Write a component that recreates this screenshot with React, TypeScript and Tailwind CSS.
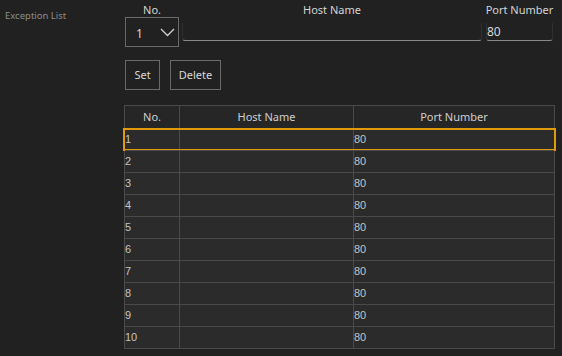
import { useState } from 'react';

const ROWS = Array.from({ length: 10 }, (_, i) => ({ no: i + 1, host: '', port: '80' }));

function Chevron() {
  return (
    <svg width="15" height="9" viewBox="0 0 15 9" fill="none">
      <path d="M1 1l6.5 6.5L14 1" stroke="#d0d0d0" strokeWidth="1.3" />
    </svg>
  );
}

function LineInput({ value, className }: { value: string; className: string }) {
  return (
    <div
      className={`h-[18px] border-b border-x border-b-[#8a8a8a] border-x-[#303030] rounded-b-[3px] text-[12px] leading-[17px] text-[#d6d6d6] ${className}`}
    >
      {value}
    </div>
  );
}

export default function App() {
  const [selected] = useState(1);

  return (
    <div
      className="w-[562px] h-[356px] bg-[#212121] flex overflow-hidden"
      style={{ fontFamily: '"Noto Sans", "Open Sans", sans-serif' }}
    >
      {/* Left label */}
      <div className="w-[124px] pl-[5px] pt-[9px] text-[9.5px] leading-[14px] text-[#8c8c8c]">Exception List</div>

      <div className="flex flex-col pt-[3px]">
        {/* Edit row */}
        <div className="flex items-start">
          <div className="flex flex-col items-center w-[54px] ml-[1px]">
            <div className="text-[11px] leading-[14px] text-[#d4d4d4]">No.</div>
            <div className="w-[54px] h-[30px] border border-[#6a6a6a] flex items-center justify-between pl-[10px] pr-[3px]">
              <span className="text-[12px] text-[#d4d4d4] pt-[3px]">1</span>
              <Chevron />
            </div>
          </div>
          <div className="flex flex-col items-center w-[300px] ml-[3px]">
            <div className="text-[11px] leading-[14px] text-[#d4d4d4]">Host Name</div>
            <LineInput value="" className="w-[300px] mt-[6px]" />
          </div>
          <div className="flex flex-col items-center w-[67px] ml-[4px]">
            <div className="text-[11px] leading-[14px] text-[#d4d4d4] whitespace-nowrap">Port Number</div>
            <LineInput value="80" className="w-[67px] mt-[6px]" />
          </div>
        </div>

        {/* Buttons */}
        <div className="flex gap-[10px] mt-[13px] ml-[1px]">
          <button className="w-[35px] h-[30px] border border-[#6a6a6a] text-[11px] text-[#d8d8d8]">Set</button>
          <button className="w-[51px] h-[30px] border border-[#6a6a6a] text-[11px] text-[#d8d8d8]">Delete</button>
        </div>

        {/* Table */}
        <div className="mt-[15px] w-[431px] border border-[#4a4a4a] text-[11px]">
          <div className="grid grid-cols-[55px_174px_200px] h-[22px] bg-[#262626] text-[#cfcfcf] leading-[21px]">
            <div className="text-center border-r border-[#4a4a4a]">No.</div>
            <div className="text-center border-r border-[#4a4a4a]">Host Name</div>
            <div className="text-center">Port Number</div>
          </div>
          {ROWS.map((r) => (
            <div
              key={r.no}
              className="relative grid grid-cols-[55px_174px_200px] h-[22px] bg-[#2b2b2b] border-t border-[#4a4a4a] text-[#c4c4c4] leading-[21px]"
              style={{ fontFamily: '"Liberation Sans", Arial, sans-serif' }}
            >
              <div className="border-r border-[#4a4a4a]">{r.no}</div>
              <div className="border-r border-[#4a4a4a]">{r.host}</div>
              <div>{r.port}</div>
              {r.no === selected && (
                <div className="absolute -left-[2px] -right-[2px] -top-[1px] -bottom-[1px] border-2 border-[#e09a0c]" />
              )}
            </div>
          ))}
        </div>
      </div>
    </div>
  );
}
